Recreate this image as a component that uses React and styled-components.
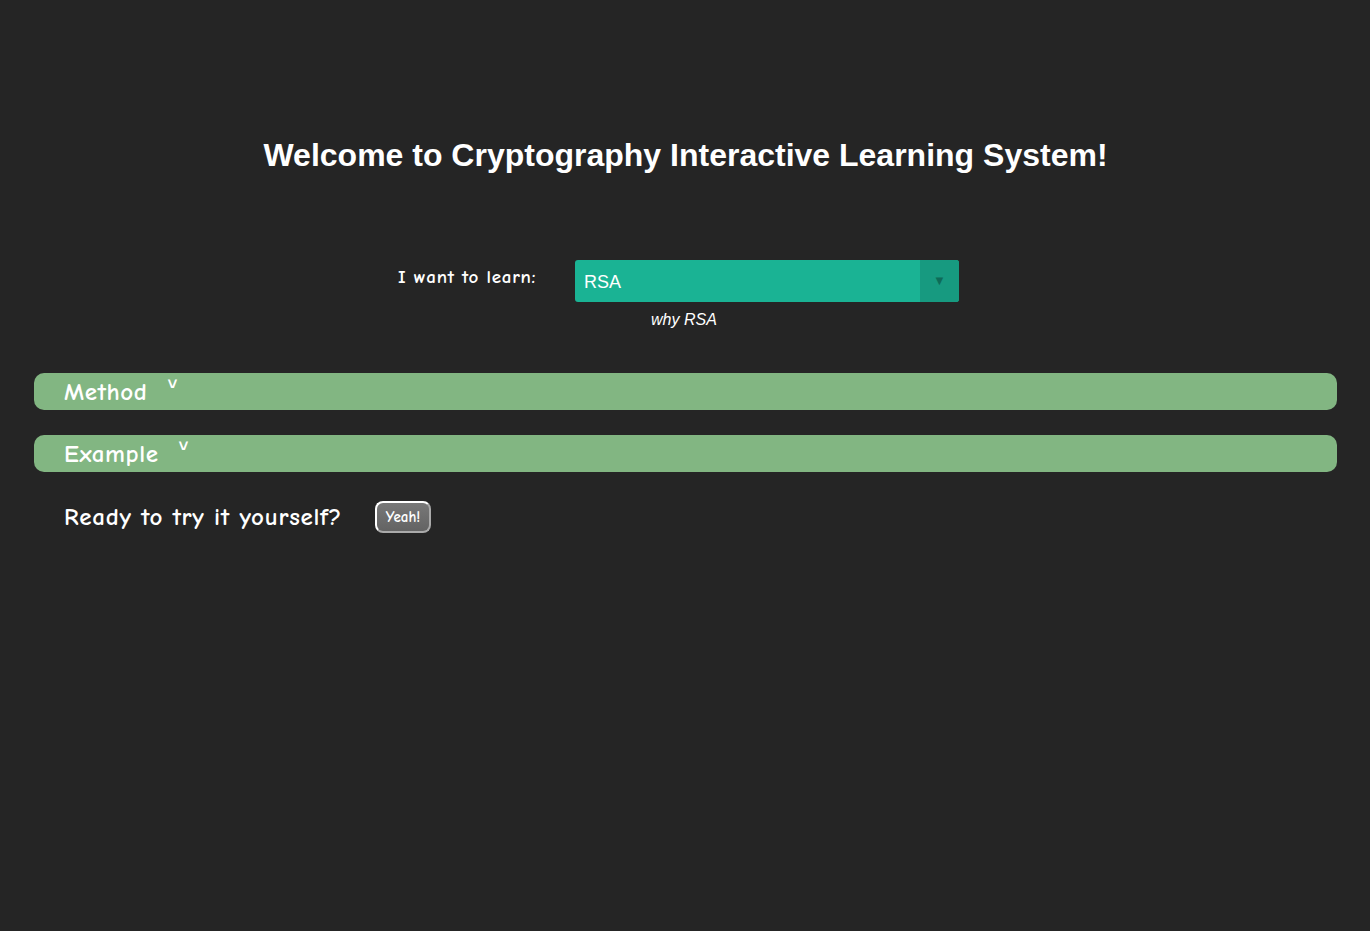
import React from 'react'
import styled, { createGlobalStyle } from 'styled-components'

const GlobalStyle = createGlobalStyle`
  html, body {
    margin: 0;
    padding: 0;
    background: #252525;
    height: 100%;
  }
  #root { min-height: 100%; }
`

const comic = `"Comic Sans MS", "Comic Neue", "Open Sans", sans-serif`

const Page = styled.div`
  min-height: 931px;
  background: #252525;
  color: #fff;
  padding: 137px 33px 0 34px;
  box-sizing: border-box;
`

const Title = styled.h1`
  margin: 0;
  text-align: center;
  font-family: "Liberation Sans", Arial, sans-serif;
  font-weight: bold;
  font-size: 32px;
  line-height: 36px;
`

const Chooser = styled.div`
  display: grid;
  grid-template-columns: 137px 384px;
  column-gap: 40px;
  justify-content: center;
  margin: 87px 0 0 -14px;
`

const Label = styled.label`
  font-family: ${comic};
  font-weight: bold;
  font-size: 19px;
  letter-spacing: 0.7px;
  white-space: nowrap;
  padding-top: 6px;
`

const SelectBox = styled.div`
  display: flex;
  height: 42px;
  background: #1ab394;
  border-radius: 3px;
  overflow: hidden;
`

const SelectValue = styled.div`
  flex: 1;
  display: flex;
  align-items: center;
  padding: 2px 0 0 9px;
  font-family: "Liberation Sans", Arial, sans-serif;
  font-size: 18px;
`

const SelectArrow = styled.div`
  width: 39px;
  display: flex;
  align-items: center;
  justify-content: center;
  background: #179a80;
  color: #0e6b58;
  font-size: 13px;
`

const Why = styled.div`
  grid-column: 2;
  padding-left: 76px;
  margin-top: 9px;
  font-family: "Liberation Sans", Arial, sans-serif;
  font-style: italic;
  font-size: 16px;
`

const Sections = styled.div`
  display: flex;
  flex-direction: column;
  gap: 25px;
  margin-top: 44px;
`

const Bar = styled.div`
  height: 37px;
  background: #82b682;
  border-radius: 10px;
  display: flex;
  align-items: center;
  padding-left: 30px;
  font-family: ${comic};
  font-weight: bold;
  font-size: 25px;
  letter-spacing: 0.6px;
  gap: 20px;
`

const Chevron = styled.span`
  font-size: 17px;
  font-weight: bold;
  margin-top: -14px;
`

const TryRow = styled.div`
  display: flex;
  align-items: center;
  gap: 33px;
  padding: 27px 0 0 30px;
  font-family: ${comic};
  font-weight: bold;
  font-size: 25px;
  letter-spacing: 0.7px;
`

const YeahButton = styled.button`
  height: 32px;
  width: 56px;
  padding: 0;
  border: 2px solid #fff;
  border-right-color: #aaa;
  border-bottom-color: #aaa;
  border-radius: 8px;
  background: linear-gradient(#787878, #636363);
  color: #fff;
  font-family: ${comic};
  font-size: 15px;
  font-weight: bold;
  margin-top: 2px;
`

export default function App() {
  return (
    <>
      <GlobalStyle />
      <Page>
        <Title>Welcome to Cryptography Interactive Learning System!</Title>
        <Chooser>
          <Label>I want to learn:</Label>
          <SelectBox>
            <SelectValue>RSA</SelectValue>
            <SelectArrow>▼</SelectArrow>
          </SelectBox>
          <Why>why RSA</Why>
        </Chooser>
        <Sections>
          <Bar>Method <Chevron>˅</Chevron></Bar>
          <Bar>Example <Chevron>˅</Chevron></Bar>
        </Sections>
        <TryRow>
          Ready to try it yourself?
          <YeahButton>Yeah!</YeahButton>
        </TryRow>
      </Page>
    </>
  )
}
